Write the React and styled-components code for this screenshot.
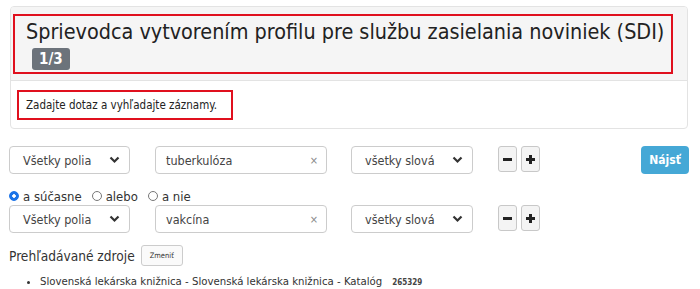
import React from 'react'
import styled, { createGlobalStyle } from 'styled-components'

const Global = createGlobalStyle`
    body {
        margin: 0;
        background: #fff;
        font-family: "DejaVu Sans Condensed", "DejaVu Sans", sans-serif;
        color: #333;
    }
`

const Page = styled.div`
    padding: 6px 11px 0 9px;
    width: 700px;
    box-sizing: border-box;
`

const Panel = styled.section`
    margin: 0 1px 0 1px;
    border: 1px solid #e3e3e3;
    border-radius: 4px;
    overflow: hidden;
`

const PanelHead = styled.div`
    background: #f5f5f5;
    border-bottom: 1px solid #e3e3e3;
    padding: 7px 14px 6px 2px;
`

const Marked = styled.div`
    border: 2px solid #e0101e;
    display: ${p => (p.$inline ? 'inline-block' : 'block')};
`

const Title = styled.h1`
    margin: 0;
    padding: 3px 6px 2px 11px;
    font-size: 21.4px;
    font-weight: 400;
    line-height: 25px;
    color: #222;
    white-space: nowrap;
`

const Badge = styled.span`
    display: inline-block;
    margin-left: 6px;
    background: #6c737b;
    color: #fff;
    font-size: 15px;
    font-weight: 700;
    line-height: 22px;
    padding: 0 7px;
    border-radius: 3px;
`

const PanelBody = styled.div`
    padding: 9px 6px 8px 6px;
`

const Hint = styled.p`
    margin: 0;
    padding: 6px 14px 6px 7px;
    font-size: 11.5px;
    line-height: 14px;
    color: #222;
`

const Form = styled.div`
    margin-top: 17px;
    display: flex;
    flex-direction: column;
`

const Row = styled.div`
    display: flex;
    align-items: flex-start;
`

const SelectBox = styled.div`
    width: ${p => p.$w}px;
    height: 28px;
    box-sizing: border-box;
    border: 1px solid #ccc;
    border-radius: 4px;
    display: flex;
    align-items: center;
    justify-content: space-between;
    padding: 0 9px 0 ${p => p.$pl}px;
    font-size: 12.5px;
    color: #444;
    margin-right: ${p => p.$mr}px;
    flex-shrink: 0;
`

const InputBox = styled(SelectBox)`
    padding: 0 8px 0 10px;
`

const Clear = styled.span`
    color: #888;
    font-size: 11px;
`

const Step = styled.button`
    width: 19px;
    height: 26px;
    box-sizing: border-box;
    border: 1px solid #c8c8c8;
    border-radius: 3px;
    background: #f4f4f4;
    padding: 0;
    margin-right: 4px;
    display: flex;
    align-items: center;
    justify-content: center;
`

const Find = styled.button`
    margin-left: auto;
    width: 48px;
    height: 28px;
    border: none;
    border-radius: 4px;
    background: #45a8d6;
    color: #fff;
    font-family: inherit;
    font-weight: 700;
    font-size: 12px;
    padding: 0;
`

const Radios = styled.div`
    display: flex;
    align-items: center;
    margin: 14px 0 1px 0;
    font-size: 13px;
    color: #333;
    height: 16px;
`

const RadioItem = styled.label`
    display: flex;
    align-items: center;
    margin-right: 10px;
`

const Dot = styled.span`
    width: 10px;
    height: 10px;
    border-radius: 50%;
    box-sizing: border-box;
    border: 1px solid ${p => (p.$on ? '#1a73e8' : '#777')};
    background: ${p => (p.$on ? 'radial-gradient(circle, #fff 0 1.5px, #1a73e8 2px)' : '#fff')};
    margin-right: 4px;
`

const Sources = styled.div`
    display: flex;
    align-items: center;
    margin: 12px 0 0 0;
`

const SourcesTitle = styled.h2`
    margin: 0;
    font-size: 13.6px;
    font-weight: 400;
    color: #333;
`

const Change = styled.button`
    margin-left: 6px;
    height: 21px;
    width: 42px;
    padding: 0;
    border: 1px solid #ccc;
    border-radius: 3px;
    background: #fafafa;
    font-family: inherit;
    font-size: 7.5px;
    color: #333;
`

const List = styled.ul`
    margin: 9px 0 0 0;
    padding-left: 31px;
    font-size: 11.3px;
    color: #333;
    line-height: 14px;
`

const Count = styled.span`
    margin-left: 10px;
    font-size: 8px;
    font-weight: 700;
    color: #444;
`

const Chevron = () => (
    <svg width="11" height="8" viewBox="0 0 11 8">
        <path d="M1.5 1.5 L5.5 5.5 L9.5 1.5" fill="none" stroke="#333" strokeWidth="2.2" />
    </svg>
)

const Minus = () => (
    <svg width="11" height="11" viewBox="0 0 11 11">
        <rect x="1" y="4" width="9" height="3" fill="#222" />
    </svg>
)

const Plus = () => (
    <svg width="11" height="11" viewBox="0 0 11 11">
        <rect x="1" y="4" width="9" height="3" fill="#222" />
        <rect x="4" y="1" width="3" height="9" fill="#222" />
    </svg>
)

const QueryRow = ({ term, children }) => (
    <Row>
        <SelectBox $w={121} $pl={13} $mr={25}>Všetky polia<Chevron /></SelectBox>
        <InputBox $w={172} $mr={24}>{term}<Clear>×</Clear></InputBox>
        <SelectBox $w={122} $pl={13} $mr={25}>všetky slová<Chevron /></SelectBox>
        <Step><Minus /></Step>
        <Step><Plus /></Step>
        {children}
    </Row>
)

export default function App() {
    return (
        <Page>
            <Global />
            <Panel>
                <PanelHead>
                    <Marked>
                        <Title>
                            Sprievodca vytvorením profilu pre službu zasielania noviniek (SDI)
                            <br />
                            <Badge>1/3</Badge>
                        </Title>
                    </Marked>
                </PanelHead>
                <PanelBody>
                    <Marked $inline>
                        <Hint>Zadajte dotaz a vyhľadajte záznamy.</Hint>
                    </Marked>
                </PanelBody>
            </Panel>
            <Form>
                <QueryRow term="tuberkulóza">
                    <Find>Nájsť</Find>
                </QueryRow>
                <Radios>
                    <RadioItem><Dot $on />a súčasne</RadioItem>
                    <RadioItem><Dot />alebo</RadioItem>
                    <RadioItem><Dot />a nie</RadioItem>
                </Radios>
                <QueryRow term="vakcína" />
                <Sources>
                    <SourcesTitle>Prehľadávané zdroje</SourcesTitle>
                    <Change>Zmeniť</Change>
                </Sources>
                <List>
                    <li>
                        Slovenská lekárska knižnica - Slovenská lekárska knižnica - Katalóg
                        <Count>265329</Count>
                    </li>
                </List>
            </Form>
        </Page>
    )
}
